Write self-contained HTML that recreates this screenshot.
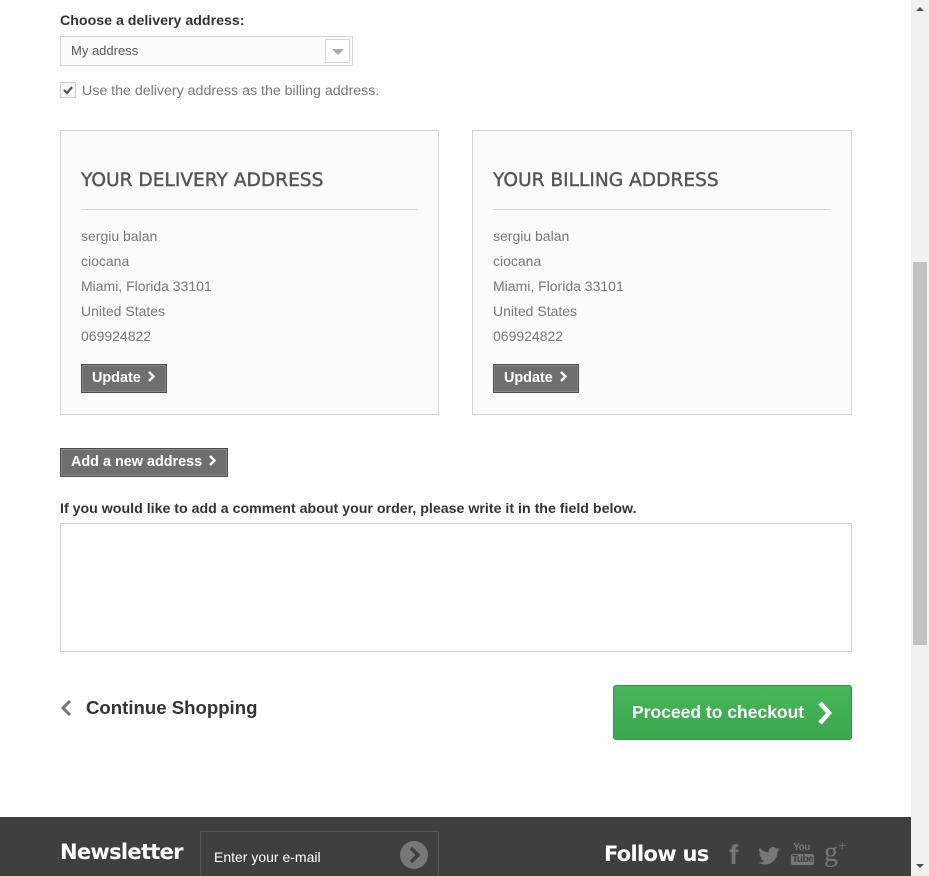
<!DOCTYPE html>
<html style="overflow:hidden"><head><meta charset="utf-8"><style>
*{box-sizing:border-box;margin:0;padding:0}
body{width:929px;height:876px;overflow:hidden;background:#fff;font-family:"Liberation Sans",sans-serif;position:relative;color:#333}
.abs{position:absolute}
.lbl{font-weight:bold;font-size:14.2px;color:#333}
.box{border:1px solid #d6d4d4;background:#fbfbfb}
.h3{font-family:"DejaVu Sans","Liberation Sans",sans-serif;font-size:18.6px;color:#555;-webkit-text-stroke:0.4px #555}
.addr{font-size:14px;color:#777;line-height:25px}
.btn{background:#6f6f6f;border:1px solid #4a4a4a;box-shadow:inset 0 0 0 1px #8a8a8a;color:#fff;font-weight:bold;font-size:14.4px;height:29px;line-height:27px;padding:0 10px 0 10px;white-space:nowrap}
.btn svg{margin-left:2px}
.ft{font-family:"DejaVu Sans","Liberation Sans",sans-serif;font-weight:bold;font-size:21px;color:#fff;letter-spacing:-0.7px}
</style></head><body>
<div class="abs lbl" style="left:60px;top:13px">Choose a delivery address:</div>
<div class="abs" style="left:60px;top:36px;width:293px;height:30px;border:1px solid #d6d4d4;background:#fbfbfb">
<span style="position:absolute;left:10px;top:6px;font-size:13px;color:#555">My address</span>
<div style="position:absolute;right:2px;top:2px;width:25px;height:24px;border:1px solid #d6d4d4;background:#fff"><div style="position:absolute;left:6px;top:9px;border-left:6px solid transparent;border-right:6px solid transparent;border-top:6px solid #aaa"></div></div>
</div>
<div class="abs" style="left:60px;top:82px;width:16px;height:16px;border:1px solid #ccc;background:#f6f6f6">
<svg width="14" height="14" viewBox="0 0 14 14" style="position:absolute;left:0;top:0"><path d="M3 7l3 3 5-6" stroke="#555" stroke-width="2.2" fill="none"/></svg></div>
<div class="abs" style="left:82px;top:83px;font-size:14.2px;color:#777">Use the delivery address as the billing address.</div>

<div class="abs box" style="left:60px;top:130px;width:379px;height:285px">
<div class="abs h3" style="left:20px;top:39px">YOUR DELIVERY ADDRESS</div>
<div class="abs" style="left:20px;top:78px;width:337px;border-top:1px solid #d6d4d4"></div>
<div class="abs addr" style="left:20px;top:93px">sergiu balan<br>ciocana<br>Miami, Florida 33101<br>United States<br>069924822</div>
<div class="abs btn" style="left:20px;top:233px">Update <svg width="9" height="11" viewBox="0 0 9 11"><path d="M2 1l4.5 4.5L2 10" stroke="#fff" stroke-width="2.4" fill="none"/></svg></div>
</div>
<div class="abs box" style="left:472px;top:130px;width:380px;height:285px">
<div class="abs h3" style="left:20px;top:39px">YOUR BILLING ADDRESS</div>
<div class="abs" style="left:20px;top:78px;width:338px;border-top:1px solid #d6d4d4"></div>
<div class="abs addr" style="left:20px;top:93px">sergiu balan<br>ciocana<br>Miami, Florida 33101<br>United States<br>069924822</div>
<div class="abs btn" style="left:20px;top:233px">Update <svg width="9" height="11" viewBox="0 0 9 11"><path d="M2 1l4.5 4.5L2 10" stroke="#fff" stroke-width="2.4" fill="none"/></svg></div>
</div>

<div class="abs btn" style="left:60px;top:448px">Add a new address <svg width="9" height="11" viewBox="0 0 9 11"><path d="M2 1l4.5 4.5L2 10" stroke="#fff" stroke-width="2.4" fill="none"/></svg></div>
<div class="abs lbl" style="left:60px;top:501px">If you would like to add a comment about your order, please write it in the field below.</div>
<div class="abs" style="left:60px;top:523px;width:792px;height:129px;border:1px solid #d6d4d4;background:#fff"></div>

<svg class="abs" style="left:60px;top:699px" width="14" height="18" viewBox="0 0 14 18"><path d="M10 2L3 9l7 7" stroke="#777" stroke-width="3" fill="none"/></svg>
<div class="abs" style="left:86px;top:697px;font-size:18.6px;font-weight:bold;color:#333">Continue Shopping</div>

<div class="abs" style="left:613px;top:685px;width:239px;height:55px;background:linear-gradient(#45b759,#3da74f);border:1px solid #359a46;border-radius:3px">
<span style="position:absolute;left:18px;top:16px;color:#fff;font-weight:bold;font-size:17.5px">Proceed to checkout</span>
<svg style="position:absolute;left:202px;top:14px" width="18" height="26" viewBox="0 0 18 26"><path d="M4 3l9 10-9 10" stroke="#fff" stroke-width="4.5" fill="none"/></svg>
</div>

<div class="abs" style="left:0;top:817px;width:911px;height:59px;background:#3f3f3f;overflow:hidden">
<div class="abs ft" style="left:60px;top:23px">Newsletter</div>
<div class="abs" style="left:200px;top:14px;width:239px;height:60px;border:1px solid #555">
<span style="position:absolute;left:13px;top:17px;color:#fff;font-size:14px">Enter your e-mail</span>
<div style="position:absolute;left:199px;top:9px;width:28px;height:28px;border-radius:50%;background:#777"><svg width="28" height="28" viewBox="0 0 28 28"><path d="M11 7l7 7-7 7" stroke="#3f3f3f" stroke-width="3.5" fill="none"/></svg></div>
</div>
<div class="abs ft" style="left:604px;top:25px">Follow us</div>
<div class="abs" style="left:729px;top:22px;font-family:'Liberation Sans',sans-serif;font-weight:bold;font-size:28px;color:#777">f</div>
<svg class="abs" style="left:758px;top:30px" width="22" height="18" viewBox="0 0 24 20"><path d="M24 2.4c-.9.4-1.8.7-2.8.8 1-.6 1.8-1.6 2.2-2.7-1 .6-2 1-3.1 1.2C19.3.7 18 0 16.6 0c-2.7 0-4.9 2.2-4.9 4.9 0 .4 0 .8.1 1.1C7.7 5.8 4.1 3.9 1.7.9c-.4.7-.7 1.6-.7 2.5 0 1.7.9 3.2 2.2 4.1-.8 0-1.6-.2-2.2-.6 0 2.4 1.7 4.4 3.9 4.8-.4.1-.8.2-1.3.2-.3 0-.6 0-.9-.1.6 2 2.4 3.4 4.6 3.4-1.7 1.3-3.8 2.1-6.1 2.1-.4 0-.8 0-1.2-.1 2.2 1.4 4.8 2.2 7.5 2.2 9.1 0 14-7.5 14-14v-.6c1-.7 1.8-1.6 2.5-2.5z" fill="#777"/></svg>
<div class="abs" style="left:791px;top:25px;width:21px;height:26px;color:#777;font-size:10px;font-weight:bold;line-height:12px;text-align:center;letter-spacing:-0.5px">You<br><span style="background:#777;color:#3f3f3f;border-radius:2px;padding:0 1px">Tube</span></div>
<div class="abs" style="left:824px;top:20px;font-family:'Liberation Serif',serif;font-size:28px;color:#777">g<sup style="font-size:15px">+</sup></div>
</div>

<div class="abs" style="left:911px;top:0;width:18px;height:876px;background:#f1f1f1">
<div style="position:absolute;left:5px;top:7px;border-left:4px solid transparent;border-right:4px solid transparent;border-bottom:4px solid #505050"></div>
<div style="position:absolute;left:2px;top:262px;width:14px;height:383px;background:#c1c1c1"></div>
<div style="position:absolute;left:5px;top:864px;border-left:4px solid transparent;border-right:4px solid transparent;border-top:4px solid #505050"></div>
</div>
</body></html>
